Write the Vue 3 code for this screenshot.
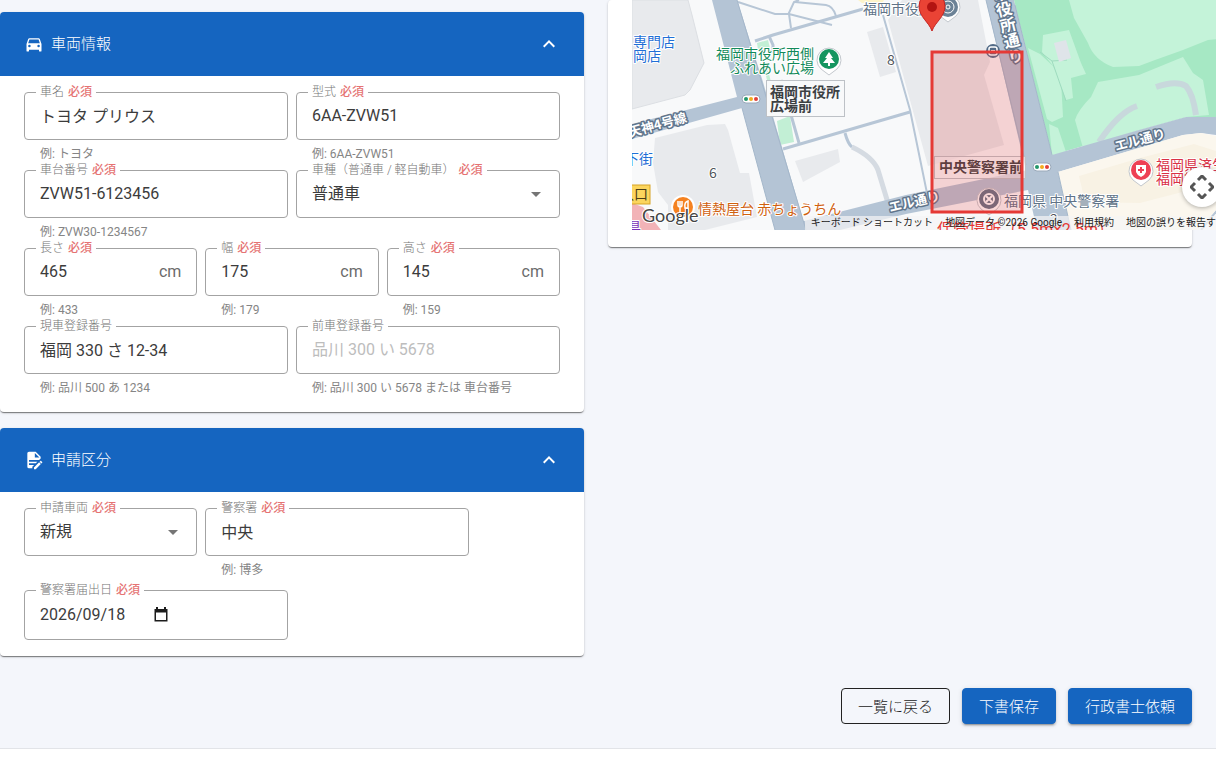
<script setup>
import { reactive, ref } from 'vue'

const open = reactive({ vehicle: true, application: true })

const vehicleFields = reactive([
  { id: 'name', label: '車名', required: true, value: 'トヨタ プリウス', hint: '例: トヨタ', span: 'half' },
  { id: 'model', label: '型式', required: true, value: '6AA-ZVW51', hint: '例: 6AA-ZVW51', span: 'half' },
  { id: 'chassis', label: '車台番号', required: true, value: 'ZVW51-6123456', hint: '例: ZVW30-1234567', span: 'half' },
  { id: 'kind', label: '車種（普通車 / 軽自動車）', required: true, value: '普通車', options: ['普通車', '軽自動車'], span: 'half' },
  { id: 'length', label: '長さ', required: true, value: '465', suffix: 'cm', hint: '例: 433', span: 'third' },
  { id: 'width', label: '幅', required: true, value: '175', suffix: 'cm', hint: '例: 179', span: 'third' },
  { id: 'height', label: '高さ', required: true, value: '145', suffix: 'cm', hint: '例: 159', span: 'third' },
  { id: 'plate', label: '現車登録番号', value: '福岡 330 さ 12-34', hint: '例: 品川 500 あ 1234', span: 'half' },
  { id: 'oldplate', label: '前車登録番号', value: '', placeholder: '品川 300 い 5678', hint: '例: 品川 300 い 5678 または 車台番号', span: 'half' },
])

const applicationFields = reactive([
  { id: 'applytype', label: '申請車両', required: true, value: '新規', options: ['新規', '代替'], span: 'third' },
  { id: 'police', label: '警察署', required: true, value: '中央', hint: '例: 博多', span: 'half' },
  { id: 'filed', label: '警察署届出日', required: true, value: '2026/09/18', date: true, span: 'half' },
])

const icons = {
  car: 'M5,11L6.5,6.5H17.5L19,11M17.5,16A1.5,1.5 0 0,1 16,14.5A1.5,1.5 0 0,1 17.5,13A1.5,1.5 0 0,1 19,14.5A1.5,1.5 0 0,1 17.5,16M6.5,16A1.5,1.5 0 0,1 5,14.5A1.5,1.5 0 0,1 6.5,13A1.5,1.5 0 0,1 8,14.5A1.5,1.5 0 0,1 6.5,16M18.92,6C18.72,5.42 18.16,5 17.5,5H6.5C5.84,5 5.28,5.42 5.08,6L3,12V20A1,1 0 0,0 4,21H5A1,1 0 0,0 6,20V19H18V20A1,1 0 0,0 19,21H20A1,1 0 0,0 21,20V12L18.92,6Z',
  edit: 'M6,2C4.89,2 4,2.89 4,4V20A2,2 0 0,0 6,22H10V20.09L12.09,18H6V16H14.09L16.09,14H6V12H18.09L20,10.09V8L14,2H6M13,3.5L18.5,9H13V3.5M20.15,13C20,13 19.86,13.05 19.75,13.16L18.73,14.18L20.82,16.26L21.84,15.25C22.05,15.03 22.05,14.67 21.84,14.46L20.54,13.16C20.43,13.05 20.29,13 20.15,13M18.14,14.77L12,20.92V23H14.08L20.23,16.85L18.14,14.77Z',
  up: 'M7.41,15.41L12,10.83L16.59,15.41L18,14L12,8L6,14L7.41,15.41Z',
}

const sections = ref([
  { key: 'vehicle', title: '車両情報', icon: icons.car, fields: vehicleFields },
  { key: 'application', title: '申請区分', icon: icons.edit, fields: applicationFields },
])
</script>

<template>
  <main class="page">
    <div class="columns">
      <div class="forms">
        <section v-for="s in sections" :key="s.key" class="card" :class="s.key">
          <button type="button" class="card-head" :aria-expanded="open[s.key]" @click="open[s.key] = !open[s.key]">
            <svg class="head-icon" viewBox="0 0 24 24" aria-hidden="true"><path :d="s.icon" /></svg>
            <span class="head-title">{{ s.title }}</span>
            <svg class="head-arrow" :class="{ closed: !open[s.key] }" viewBox="0 0 24 24" aria-hidden="true"><path :d="icons.up" /></svg>
          </button>
          <div v-if="open[s.key]" class="fields">
            <div v-for="f in s.fields" :key="f.id" class="field" :class="[f.span, { tall: f.date }]">
              <div class="box">
                <label class="label" :for="f.id">{{ f.label }}<span v-if="f.required" class="required">必須</span></label>
                <template v-if="f.options">
                  <select :id="f.id" v-model="f.value" class="control">
                    <option v-for="o in f.options" :key="o">{{ o }}</option>
                  </select>
                  <svg class="drop" viewBox="0 0 24 24" aria-hidden="true"><path d="M7,10L12,15L17,10H7Z" /></svg>
                </template>
                <template v-else-if="f.date">
                  <input :id="f.id" v-model="f.value" type="text" class="control date" />
                  <button type="button" class="calendar" aria-label="カレンダーを開く">
                    <svg viewBox="0 0 14 16" aria-hidden="true"><path d="M2,1H4V3H10V1H12V3H13.5V15.5H.5V3H2ZM2,6.5V14H12V6.5Z" fill-rule="evenodd" /></svg>
                  </button>
                </template>
                <template v-else>
                  <input :id="f.id" v-model="f.value" type="text" class="control" :placeholder="f.placeholder" />
                  <span v-if="f.suffix" class="suffix">{{ f.suffix }}</span>
                </template>
              </div>
              <div v-if="!f.date" class="hint">{{ f.hint }}</div>
            </div>
          </div>
        </section>
      </div>

      <section class="card map-card">
        <div class="map">
          <svg class="map-canvas" viewBox="632 0 600 230" role="img" aria-label="保管場所の地図">
            <rect x="632" y="0" width="600" height="230" fill="#f8f9fa" />
            <g fill="#e8eaed">
              <path d="M632,0H688L692,15L704,63L690,90L685,95L632,109Z" stroke="#dcdfe3" />
              <path d="M655,138L707,125L725,124L728,130L740,173H749L757,217L697,232H668V205L658,192L653,163Z" />
              <path d="M795,161L838,149L840,162L803,182Z" />
              <path d="M867,32L883,27L896,72L880,77Z" />
              <path d="M888,20L902,0H978L990,62L984,75L1004,145L928,166Z" />
            </g>
            <path d="M632,203L643,207L661,230H632Z" fill="#f2b3b7" />
            <g fill="#c2efd5">
              <path d="M757,43L768,40L770,48L758,50Z" />
              <path d="M777,121L790,116L794,142L780,145Z" />
              <path d="M765,72L768,70L771,82L768,84Z" />
            </g>
            <path d="M858,0H884L882,4L862,3Z" fill="#fdf4c9" />
            <g fill="none" stroke="#b7c6d6" stroke-width="3">
              <path d="M738,2L775,14H789L832,25M788,15L794,2L799,0M795,2L826,5Q833,6 836,16M789,14L791,28" stroke-width="2" />
              <path d="M755,41L773,35L863,9" />
              <path d="M769,36L773,45V53M781,80L799,143" />
              <path d="M783,149L910,112" />
              <path d="M883,15L910,110L928,198" stroke-width="2" />
              <path d="M845,133Q848,144 852,147" />
              <path d="M852,147Q873,157 878,170L888,203" stroke="#d5dbe2" stroke-width="5" />
              <path d="M1201,230L1232,192" stroke-width="2" />
            </g>
            <g fill="#b4c4d5">
              <path d="M712,0H737L763,82L806,230H775L742,108L632,139V124L737,97Z" />
              <path d="M800,222L906,195L1028,170V190L906,214L840,230H802Z" />
              <path d="M986,0H1014L1052,155L1058,172L1071,230H1037L1028,190L1025,166Z" />
            </g>
            <path d="M1014,0H1232V117H1186L1139,130L1052,155Z" fill="#a6e8c4" />
            <g fill="#c4f3d9">
              <path d="M1069,0H1232V38L1208,40L1183,50L1155,60L1139,66L1113,67Q1094,60 1088,43L1074,18Z" />
              <path d="M1083,148L1075,120Q1078,110 1091,97L1098,82L1139,75L1183,57L1193,73L1203,80L1209,115L1186,117L1139,130Z" />
              <path d="M1043,35L1069,30L1081,63L1086,74L1071,78L1073,98L1066,100L1054,67L1042,52Z" />
              <path d="M1028,48L1040,54L1053,66L1061,80L1063,117L1052,122L1047,119Z" />
              <path d="M1049,124L1058,128L1066,152L1052,155Z" />
            </g>
            <path d="M1040,52L1052,61L1067,60M1052,61L1066,101" fill="none" stroke="#9edbbf" />
            <path d="M1054,43L1066,40L1071,58L1059,62Z" fill="#dfe4e9" />
            <g fill="none" stroke="#c8d8dc" stroke-width="6">
              <path d="M1156,87Q1176,80 1186,86Q1193,94 1196,115" />
              <path d="M1137,106Q1119,112 1099,142" />
            </g>
            <path d="M1052,155L1139,130L1186,117H1232V137L1201,133L1183,135L1139,148L1058,172L1045,180Z" fill="#b4c4d5" />
            <path d="M1058,172L1139,148L1183,135L1201,133L1232,139V192L1198,230H1071Z" fill="#fbf7ee" />
            <path d="M1079,176L1140,158L1194,144L1228,155V180L1140,203L1085,202Z" fill="#f8f2e4" />
            <path d="M1015,5L1052,155M986,0L1026,165M742,108L775,230M737,0L806,230M1058,172L1071,230" fill="none" stroke="#a4b7ca" />

            <g class="street">
              <text transform="translate(630 137) rotate(-15)">天神4号線</text>
              <text transform="translate(1116 151) rotate(-15)">エル通り</text>
              <text transform="translate(890 212) rotate(-13)">エル通り</text>
              <text class="vertical" transform="translate(998 -14) rotate(-14)">市役所通り</text>
            </g>
            <g class="place blue">
              <text x="633" y="47">専門店</text>
              <text x="633" y="61">岡店</text>
              <text x="625" y="164">下街</text>
            </g>
            <g class="place green">
              <text x="814" y="59" text-anchor="end">福岡市役所西側</text>
              <text x="814" y="73" text-anchor="end">ふれあい広場</text>
            </g>
            <text class="place slate" x="863" y="14">福岡市役所</text>
            <text class="place slate" x="1004" y="206">福岡県 中央警察署</text>
            <text class="place orange" x="698" y="214">情熱屋台 赤ちょうちん</text>
            <g class="place red">
              <text x="1156" y="170">福岡県済生会</text>
              <text x="1156" y="184">福岡総合病院</text>
            </g>
            <text class="place purple" x="627" y="232">県</text>
            <g class="place number">
              <text x="709" y="178">6</text>
              <text x="887" y="65">8</text>
              <text x="1050" y="224">2</text>
            </g>

            <rect x="620" y="185" width="30" height="19" fill="#fbd55e" stroke="#d6a327" />
            <text class="gate" x="620" y="199">入口</text>

            <rect x="766.5" y="80.5" width="78" height="36" fill="#f8f9fa" stroke="#bdc1c6" />
            <g class="crossing"><text x="770" y="97">福岡市役所</text><text x="770" y="111">広場前</text></g>
            <rect x="934.5" y="156.5" width="91" height="22" fill="#f8f9fa" fill-opacity=".6" stroke="#bdc1c6" />
            <text class="crossing" x="939" y="172">中央警察署前</text>

            <g v-for="p in [[751, 99], [1042, 167]]" :key="p[0]" :transform="`translate(${p[0]} ${p[1]})`">
              <rect x="-9" y="-4" width="18" height="8" rx="4" fill="#fff" stroke="#9aa9ba" />
              <circle cx="-5" r="2" fill="#23966a" /><circle r="2" fill="#f4ad1f" /><circle cx="5" r="2" fill="#df403a" />
            </g>

            <g transform="translate(829 60)">
              <path d="M0,15L-8,9A12,12 0 1,1 8,9Z" fill="#fff" stroke="#c3c8cd" />
              <circle cy="-1" r="10" fill="#14955f" />
              <path d="M0,-8L4,-2H2L6,3H1V6H-1V3H-6L-2,-2H-4Z" fill="#fff" />
            </g>
            <g transform="translate(948 7)">
              <path d="M0,15L-8,9A12,12 0 1,1 8,9Z" fill="#fff" stroke="#c3c8cd" />
              <circle r="10" fill="#6c8296" /><circle r="6" fill="none" stroke="#fff" /><circle r="2" fill="none" stroke="#fff" />
            </g>
            <g transform="translate(989 200)">
              <path d="M0,15L-8,9A12,12 0 1,1 8,9Z" fill="#fff" stroke="#c3c8cd" />
              <circle cy="-1" r="10" fill="#627487" /><circle cy="-1" r="5" fill="none" stroke="#fff" stroke-width="2" /><path d="M-3,-4L3,2M3,-4L-3,2" stroke="#fff" stroke-width="2" />
            </g>
            <g transform="translate(683 207)">
              <circle r="12" fill="#fff" /><circle r="10" fill="#f58220" />
              <path d="M-5,-6V-2Q-5,0 -3,0V6M-3,-6V0M-1,-6V-2Q-1,0 -3,0M4,6V1H2Q1,-5 5,-6V6" fill="none" stroke="#fff" stroke-width="1.5" />
            </g>
            <g transform="translate(1141 171)">
              <path d="M0,15L-8,9A12,12 0 1,1 8,9Z" fill="#fff" stroke="#c3c8cd" />
              <circle cy="-1" r="10" fill="#ee4055" />
              <path d="M-5,-6H5V1Q4,4 0,6Q-4,4 -5,1Z" fill="#fff" /><path d="M-3,-1H3M0,-4V2" stroke="#ee4055" stroke-width="2" />
            </g>
            <g transform="translate(993 51)">
              <circle r="7" fill="#526b87" /><rect x="-4" y="-4" width="8" height="8" rx="2" fill="none" stroke="#fff" stroke-width="1.5" /><path d="M-2,0H2" stroke="#fff" stroke-width="2" />
            </g>

            <rect x="932" y="52" width="90" height="160" fill="#e53935" fill-opacity=".2" stroke="#e53935" stroke-width="3" />
            <path d="M932,31C929,22 919,17 919,6A13,13 0 0,1 945,6C945,17 935,22 932,31Z" fill="#ea4335" stroke="#c5221f" />
            <circle cx="932" cy="7" r="5" fill="#b31412" />
            <rect x="805" y="216" width="427" height="14" fill="#f5f5f5" fill-opacity=".7" />
            <text class="garage" x="937" y="235">保管場所（5.5m×2.5m）</text>
            <text class="brand" x="642" y="222">Google</text>
          </svg>
          <button type="button" class="camera" aria-label="地図のカメラ コントロール">
            <svg viewBox="0 0 24 24" aria-hidden="true"><path d="M8,5L12,1L16,5M8,19L12,23L16,19M5,8L1,12L5,16M19,8L23,12L19,16" /></svg>
          </button>
          <div class="credits">
            <button type="button">キーボード ショートカット</button>
            <span>地図データ ©2026 Google</span>
            <a href="#terms">利用規約</a>
            <a href="#report">地図の誤りを報告する</a>
          </div>
        </div>
      </section>
    </div>

    <div class="actions">
      <button type="button" class="action outlined">一覧に戻る</button>
      <button type="button" class="action">下書保存</button>
      <button type="button" class="action">行政書士依頼</button>
    </div>
  </main>
</template>

<style>
body {
  background: #fff;
}
</style>

<style scoped>
.page {
  box-sizing: border-box;
  padding: 0 24px 24px 0;
  overflow: hidden;
  background: #f4f6fb;
  border-bottom: 1px solid #e2e4e8;
  color: #3c3c3c;
  font-family: Roboto, "Noto Sans CJK JP", sans-serif;
  font-size: 16px;
}
.page * {
  box-sizing: border-box;
}
button,
input,
select {
  margin: 0;
  font: inherit;
  color: inherit;
}
.columns {
  display: grid;
  grid-template-columns: minmax(0, 1fr) minmax(0, 1fr);
  gap: 24px;
  align-items: start;
}
.forms {
  display: grid;
  gap: 16px;
  padding-top: 12px;
}
.card {
  background: #fff;
  border-radius: 4px;
  box-shadow: 0 2px 1px -1px rgba(0, 0, 0, 0.3), 0 1px 1px rgba(0, 0, 0, 0.2), 0 1px 3px rgba(0, 0, 0, 0.16);
}
.card-head {
  display: flex;
  align-items: center;
  gap: 7px;
  width: 100%;
  height: 64px;
  padding: 0 23px 0 24px;
  border: 0;
  border-radius: 4px 4px 0 0;
  background: #1565c0;
  color: #fff;
  font-size: 15px;
  text-align: left;
  cursor: pointer;
}
.head-icon {
  width: 20px;
  height: 20px;
  fill: currentColor;
}
.head-title {
  flex: 1;
  padding-bottom: 4px;
  font-weight: 300;
}
.head-arrow {
  width: 24px;
  height: 24px;
  fill: currentColor;
}
.head-arrow.closed {
  transform: rotate(180deg);
}
.fields {
  display: grid;
  grid-template-columns: repeat(12, minmax(0, 1fr));
  gap: 8px;
  padding: 16px 24px;
}
.application .fields {
  row-gap: 12px;
}
.half {
  grid-column: span 6;
}
.third {
  grid-column: span 4;
}
.box {
  position: relative;
  display: flex;
  align-items: center;
  height: 48px;
  border: 1px solid #a3a3a3;
  border-radius: 4px;
}
.tall {
  grid-column: 1 / span 6;
}
.tall .box {
  height: 50px;
}
.label {
  position: absolute;
  top: -9px;
  left: 11px;
  display: flex;
  gap: 4px;
  padding: 0 4px;
  background: #fff;
  color: #757575;
  font-size: 12px;
  font-weight: 300;
  line-height: 16px;
  white-space: nowrap;
}
.required {
  color: #e57373;
  font-weight: 500;
}
.control {
  flex: 1;
  min-width: 0;
  width: 100%;
  height: 100%;
  padding: 0 15px 2px;
  border: 0;
  outline: 0;
  background: transparent;
  appearance: none;
}
.control::placeholder {
  color: #bdbdbd;
  opacity: 1;
}
.suffix {
  padding: 0 15px 2px 0;
  color: #6b6b6b;
}
.drop {
  position: absolute;
  right: 11px;
  width: 24px;
  height: 24px;
  fill: #757575;
  pointer-events: none;
}
.date {
  flex: 0 0 129px;
  padding-right: 0;
}
.calendar {
  display: flex;
  padding: 0 0 2px;
  border: 0;
  background: none;
}
.calendar svg {
  width: 14px;
  height: 16px;
  fill: #1c1c1c;
}
.hint {
  height: 22px;
  padding: 6px 16px 0;
  color: #858585;
  font-size: 12px;
  line-height: 16px;
  white-space: nowrap;
}
.map-card {
  padding: 0 24px 17px;
}
.map {
  position: relative;
  width: 600px;
}
.map-canvas {
  display: block;
  width: 100%;
  font-family: "Noto Sans CJK JP", sans-serif;
  font-size: 14px;
}
.street {
  fill: #fff;
  stroke: #60758c;
  stroke-width: 3;
  stroke-linejoin: round;
  paint-order: stroke;
  font-size: 13px;
  font-weight: 700;
}
.vertical {
  writing-mode: vertical-rl;
  font-size: 16px;
}
.place {
  stroke: #fff;
  stroke-width: 2;
  stroke-linejoin: round;
  paint-order: stroke;
}
.blue {
  fill: #1f6fd6;
}
.green {
  fill: #128a5a;
}
.slate {
  fill: #607387;
}
.orange {
  fill: #d0610f;
}
.red {
  fill: #d93045;
}
.purple {
  fill: #7a32b8;
}
.number {
  fill: #50555b;
}
.gate {
  fill: #4a3d16;
}
.crossing {
  fill: #3c4043;
  font-weight: 700;
}
.garage {
  fill: #e53935;
  font-family: Roboto, "Noto Sans CJK JP", sans-serif;
  font-size: 16px;
}
.brand {
  fill: #444;
  stroke: #fff;
  stroke-width: 2;
  paint-order: stroke;
  font-family: Lato, sans-serif;
  font-size: 18px;
}
.camera {
  position: absolute;
  right: 10px;
  bottom: 23px;
  display: flex;
  align-items: center;
  justify-content: center;
  width: 40px;
  height: 40px;
  border: 0;
  border-radius: 50%;
  background: #fff;
  box-shadow: 0 1px 4px rgba(0, 0, 0, 0.3);
}
.camera svg {
  width: 24px;
  height: 24px;
  fill: none;
  stroke: #555;
  stroke-width: 3;
}
.credits {
  position: absolute;
  right: 0;
  bottom: 0;
  display: flex;
  gap: 12px;
  padding: 0 6px;
  color: #222;
  font-size: 10px;
  line-height: 14px;
  white-space: nowrap;
}
.credits a,
.credits button {
  padding: 0;
  border: 0;
  background: none;
  color: inherit;
  text-decoration: none;
}
.actions {
  display: flex;
  justify-content: flex-end;
  gap: 12px;
  padding-top: 32px;
}
.action {
  height: 36px;
  padding: 0 16px 2px;
  border: 1px solid #1565c0;
  border-radius: 4px;
  background: #1565c0;
  box-shadow: 0 3px 1px -2px rgba(0, 0, 0, 0.2), 0 2px 2px rgba(0, 0, 0, 0.14), 0 1px 5px rgba(0, 0, 0, 0.12);
  color: #fff;
  font-size: 15px;
  font-weight: 300;
  white-space: nowrap;
}
.outlined {
  border-color: #222;
  background: transparent;
  box-shadow: none;
  color: #222;
}
</style>
